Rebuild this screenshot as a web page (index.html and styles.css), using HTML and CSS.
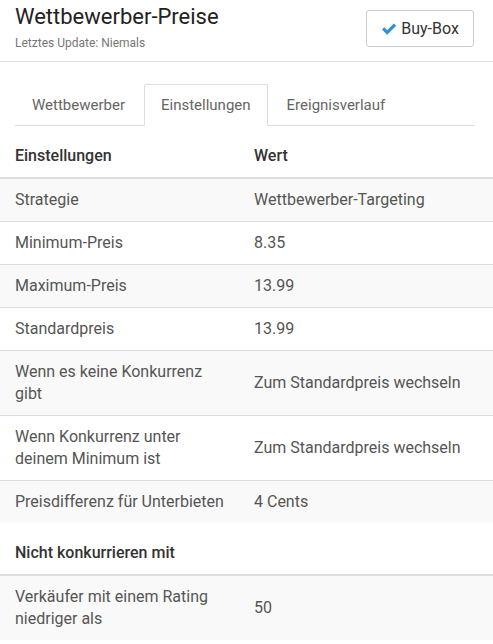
FILE: index.html
```html
<!DOCTYPE html>
<html>
<head>
  <meta charset="UTF-8">
  <title>Wettbewerber-Preise</title>
  <link rel="stylesheet" href="styles.css">
</head>
<body>
  <header class="page-header">
    <div class="titles">
      <h1>Wettbewerber-Preise</h1>
      <div class="subtitle">Letztes Update: Niemals</div>
    </div>
    <button class="btn">
      <svg class="check" width="16" height="14" viewBox="0 0 16 14">
        <path d="M1 7.6 L3.3 5.3 L6.2 8.2 L12.9 1.5 L15.2 3.8 L6.2 12.8 Z" fill="#2f8fd8"/>
      </svg>
      Buy-Box
    </button>
  </header>

  <nav class="tabs">
    <a href="#">Wettbewerber</a>
    <a href="#" class="active">Einstellungen</a>
    <a href="#">Ereignisverlauf</a>
  </nav>

  <table class="settings">
    <thead>
      <tr><th class="col-name">Einstellungen</th><th>Wert</th></tr>
    </thead>
    <tbody>
      <tr><td>Strategie</td><td>Wettbewerber-Targeting</td></tr>
      <tr><td>Minimum-Preis</td><td>8.35</td></tr>
      <tr><td>Maximum-Preis</td><td>13.99</td></tr>
      <tr><td>Standardpreis</td><td>13.99</td></tr>
      <tr><td>Wenn es keine Konkurrenz gibt</td><td>Zum Standardpreis wechseln</td></tr>
      <tr><td>Wenn Konkurrenz unter deinem Minimum ist</td><td>Zum Standardpreis wechseln</td></tr>
      <tr><td>Preisdifferenz für Unterbieten</td><td>4 Cents</td></tr>
    </tbody>
  </table>

  <table class="settings">
    <thead>
      <tr><th class="col-name">Nicht konkurrieren mit</th><th></th></tr>
    </thead>
    <tbody>
      <tr><td>Verkäufer mit einem Rating niedriger als</td><td>50</td></tr>
    </tbody>
  </table>
</body>
</html>
```

FILE: styles.css
```css
body {
  margin: 0;
  font-family: Roboto, 'Liberation Sans', sans-serif;
  background-color: #FFFFFF;
  color: #555555;
}

.page-header {
  display: flex;
  justify-content: space-between;
  align-items: flex-start;
  padding: 4px 19px 0 15px;
  height: 57px;
  border-bottom: 1px solid #E0E0E0;
}

.page-header h1 {
  margin: 0;
  font-size: 22px;
  font-weight: 400;
  color: #222222;
  line-height: 26px;
}

.subtitle {
  margin-top: 6px;
  font-size: 12px;
  color: #777777;
}

.btn {
  margin-top: 6px;
  width: 108px;
  height: 37px;
  display: flex;
  align-items: center;
  justify-content: center;
  gap: 4px;
  background-color: #FFFFFF;
  border: 1px solid #CCCCCC;
  border-radius: 3px;
  font-family: Roboto, 'Liberation Sans', sans-serif;
  font-size: 16px;
  color: #333333;
  padding: 0;
}

.tabs {
  display: flex;
  margin: 22px 18px 0 15px;
  border-bottom: 1px solid #DDDDDD;
}

.tabs a {
  display: block;
  padding: 10px 16px 9px;
  margin-right: 2px;
  margin-bottom: -1px;
  font-size: 15px;
  line-height: 21px;
  color: #666666;
  text-decoration: none;
  border: 1px solid transparent;
  border-radius: 2px 2px 0 0;
}

.tabs a.active {
  border-color: #DDDDDD;
  border-bottom-color: #FFFFFF;
}

.settings {
  width: 100%;
  border-collapse: collapse;
  margin-top: 9px;
  font-size: 16px;
}

.settings th,
.settings td {
  text-align: left;
  padding: 10px 15px;
  line-height: 22px;
  vertical-align: middle;
}

.settings th:first-child,
.settings td:first-child {
  padding-right: 8px;
}

.settings th {
  font-weight: 500;
  color: #333333;
  border-bottom: 2px solid #DDDDDD;
}

.settings td {
  border-top: 1px solid #DDDDDD;
}

.settings tbody tr:first-child td {
  border-top: none;
}

.settings tbody tr:nth-child(odd) {
  background-color: #F9F9F9;
}

.settings .col-name {
  width: 216px;
}
```
